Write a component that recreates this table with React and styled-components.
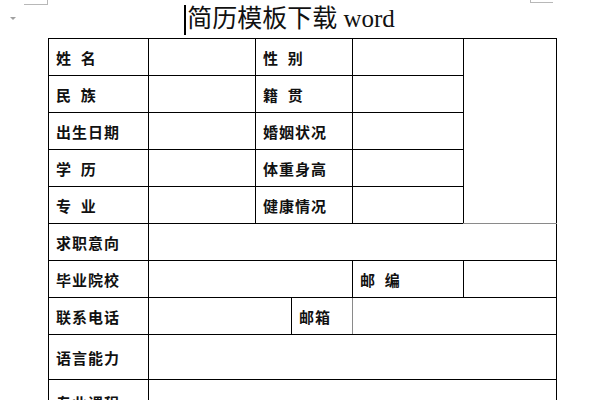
import React from "react";
import styled, { createGlobalStyle } from "styled-components";

const Global = createGlobalStyle`
  html, body { margin: 0; padding: 0; background: #fff; }
  body { width: 600px; height: 400px; overflow: hidden; font-family: "Liberation Serif", "Noto Sans CJK SC", serif; }
`;

const Page = styled.div`
  position: relative;
  width: 600px;
  height: 400px;
  overflow: hidden;
  padding-left: 48px;
  box-sizing: border-box;
`;

const CornerMark = styled.div`
  position: absolute;
  top: 0;
  left: ${(p) => p.$left}px;
  width: ${(p) => p.$w}px;
  height: ${(p) => p.$h}px;
  border-bottom: 1px solid #b8b8b8;
  ${(p) => (p.$side === "left" ? "border-left" : "border-right")}: 1px solid #b8b8b8;
`;

const DropArrow = styled.div`
  position: absolute;
  left: 10px;
  top: 17px;
  width: 0;
  height: 0;
  border-left: 3px solid transparent;
  border-right: 3px solid transparent;
  border-top: 3px solid #a0a0a0;
`;

const TitleBar = styled.div`
  width: 507px;
  height: 38px;
  display: flex;
  justify-content: center;
  align-items: center;
  padding-right: 24px;
  box-sizing: border-box;
`;

const Caret = styled.span`
  display: inline-block;
  width: 2px;
  height: 30px;
  background: #000;
  margin-right: 1px;
  margin-top: 2px;
`;

const Title = styled.h1`
  margin: 0;
  font-family: "Liberation Serif", "Noto Sans CJK SC", serif;
  font-weight: normal;
  font-size: 25px;
  line-height: 30px;
  color: #111;
  display: flex;
  align-items: center;
`;

const Table = styled.table`
  border-collapse: collapse;
  table-layout: fixed;
  width: 508px;
`;

const Row = styled.tr`
  height: ${(p) => p.$h}px;
`;

const Cell = styled.td`
  border: 1px solid #000;
  padding: 0 0 0 7px;
  box-sizing: border-box;
  font-family: "Noto Sans CJK SC", sans-serif;
  font-size: 15px;
  font-weight: 700;
  letter-spacing: 1px;
  color: #111;
  white-space: pre;
  vertical-align: ${(p) => (p.$top ? "top" : "middle")};
  padding-top: ${(p) => (p.$top ? "12px" : "0")};
  ${(p) => (p.$greyRight ? "border-right-color: #8a8a8a;" : "")}
  ${(p) => (p.$greyBottom ? "border-bottom-color: #8a8a8a;" : "")}
`;

const basic = [
  ["姓  名", "性  别"],
  ["民  族", "籍  贯"],
  ["出生日期", "婚姻状况"],
  ["学  历", "体重身高"],
  ["专  业", "健康情况"],
];

export default function App() {
  return (
    <>
      <Global />
      <Page>
        <CornerMark $side="right" $left={24} $w={23} $h={4} />
        <CornerMark $side="left" $left={530} $w={22} $h={2} />
        <DropArrow />
        <TitleBar>
          <Caret />
          <Title>简历模板下载 word</Title>
        </TitleBar>
        <Table>
          <colgroup>
            <col style={{ width: 100 }} />
            <col style={{ width: 107 }} />
            <col style={{ width: 36 }} />
            <col style={{ width: 61 }} />
            <col style={{ width: 111 }} />
            <col style={{ width: 93 }} />
          </colgroup>
          <tbody>
            {basic.map(([a, b], i) => (
              <Row $h={37} key={a}>
                <Cell>{a}</Cell>
                <Cell />
                <Cell colSpan={2}>{b}</Cell>
                <Cell />
                {i === 0 && <Cell rowSpan={5} $greyBottom />}
              </Row>
            ))}
            <Row $h={37}>
              <Cell>求职意向</Cell>
              <Cell colSpan={5} />
            </Row>
            <Row $h={37}>
              <Cell>毕业院校</Cell>
              <Cell colSpan={3} />
              <Cell>{"邮  编"}</Cell>
              <Cell />
            </Row>
            <Row $h={37}>
              <Cell>联系电话</Cell>
              <Cell colSpan={2} />
              <Cell $greyRight>邮箱</Cell>
              <Cell colSpan={2} />
            </Row>
            <Row $h={45}>
              <Cell>语言能力</Cell>
              <Cell colSpan={5} />
            </Row>
            <Row $h={60}>
              <Cell $top>专业课程</Cell>
              <Cell colSpan={5} />
            </Row>
          </tbody>
        </Table>
      </Page>
    </>
  );
}
